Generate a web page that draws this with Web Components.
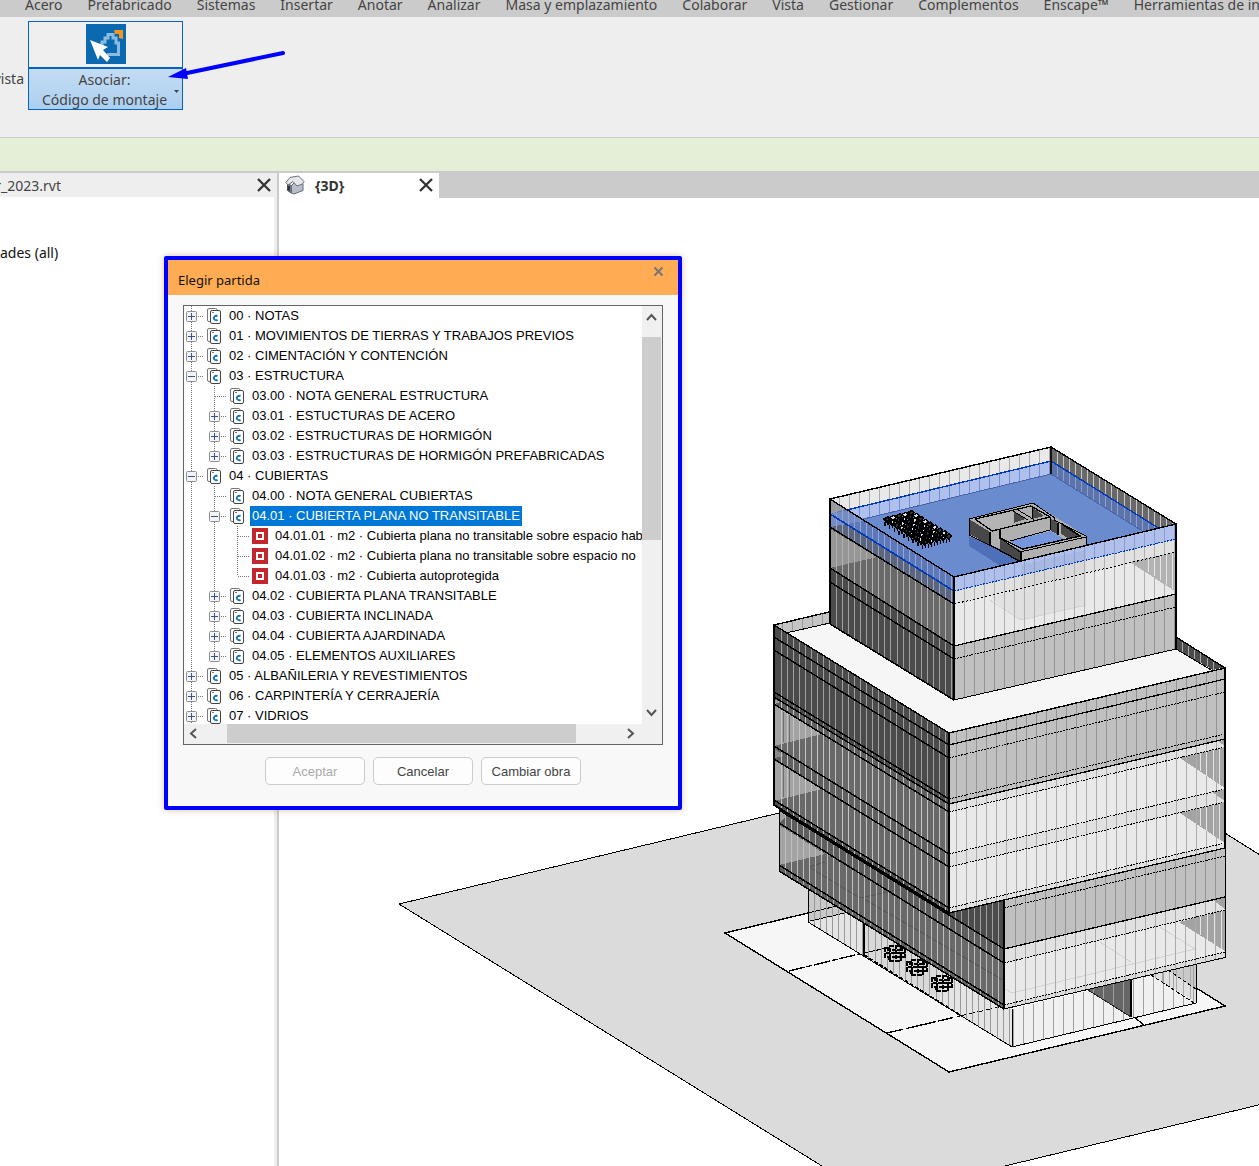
<!DOCTYPE html>
<html lang="es">
<head>
<meta charset="utf-8">
<title>Elegir partida</title>
<style>
html, body { height: 100%; margin: 0; }
body { font-family: "Noto Sans", "Open Sans", sans-serif; font-size: 14px; color: #444; background: #fff; overflow: hidden; }
</style>
</head>
<body>
<app-window>
  <menu-bar slot="menu">
    <a href="#acero">Acero</a><a href="#prefabricado">Prefabricado</a><a href="#sistemas">Sistemas</a><a href="#insertar">Insertar</a><a href="#anotar">Anotar</a><a href="#analizar">Analizar</a><a href="#masa">Masa y emplazamiento</a><a href="#colaborar">Colaborar</a><a href="#vista">Vista</a><a href="#gestionar">Gestionar</a><a href="#complementos">Complementos</a><a href="#enscape">Enscape™</a><a href="#herramientas">Herramientas de int</a>
  </menu-bar>
  <ribbon-panel slot="ribbon"></ribbon-panel>
  <project-browser slot="browser"><span slot="title">r_2023.rvt</span><span>ades (all)</span></project-browser>
  <model-view slot="view"><span slot="title">{3D}</span><model-scene></model-scene></model-view>
  <item-dialog slot="dialog">
    <span slot="title">Elegir partida</span>
    <item-tree></item-tree>
    <push-button slot="actions" disabled>Aceptar</push-button>
    <push-button slot="actions">Cancelar</push-button>
    <push-button slot="actions">Cambiar obra</push-button>
  </item-dialog>
</app-window>

<script>
function define(name, html, setup) {
  customElements.define(name, class extends HTMLElement {
    constructor() {
      super();
      this.attachShadow({ mode: 'open' }).innerHTML = '<style>:host,*{box-sizing:border-box}</style>' + html;
    }
    connectedCallback() { if (setup) setup(this, this.shadowRoot); }
  });
}

define('app-window', `
<style>
:host { display: grid; grid-template-rows: 17px 120px 36px 1fr; height: 100vh; position: relative; overflow: hidden; }
.status { background: #e5efd8; border-top: 1px solid #cbcbcb; border-bottom: 2px solid #cbcbcb; }
.work { display: grid; grid-template-columns: 279px 1fr; min-height: 0; }
</style>
<slot name="menu"></slot>
<slot name="ribbon"></slot>
<div class="status"></div>
<div class="work"><slot name="browser"></slot><slot name="view"></slot></div>
<slot name="dialog"></slot>`);

define('menu-bar', `
<style>
:host { display: flex; align-items: flex-end; gap: 25px; padding: 0 0 2px 25px; background: #cbcbcb; overflow: hidden; height: 17px; white-space: nowrap; }
::slotted(a) { color: #444; text-decoration: none; line-height: 20px; flex: none; }
</style><slot></slot>`);

define('ribbon-panel', `
<style>
:host { display: flex; gap: 4px; background: #eee; padding-top: 4px; position: relative; }
.prev { width: 24px; height: 116px; padding-top: 48px; display: flex; justify-content: flex-end; overflow: hidden; line-height: 20px; }
button { width: 155px; height: 89px; padding: 0; border: 1px solid #0563c1; background: #efefef; display: flex; flex-direction: column; font: inherit; color: #444; }
.top { height: 45px; width: 100%; display: flex; justify-content: center; padding-top: 2px; }
.low { height: 42px; width: 100%; border-top: 2px solid #0563c1; background: linear-gradient(#c4dcf4, #accff0); display: flex; align-items: flex-start; justify-content: space-between; padding: 1px 3px 0 13px; line-height: 20px; }
.low svg { flex: none; margin-top: 20px; }
.arrow { position: absolute; left: 166px; top: 31px; }
</style>
<div class="prev"><span>vista</span></div>
<button type="button">
 <span class="top"><svg width="40" height="40" viewBox="0 0 40 40"><path fill="#0a69b1" d="M0 0h40v40H0z"/><path d="M21 30.500h11.500V19H30v-5h-3v-3.500h-5V14h-3v4h-3v4" fill="none" stroke="#8bbbdf" stroke-width="3"/><path fill="#f7941d" d="M28 6h9v9l-4-1v-4h-4z"/><path fill="#fff" d="m4 16 18 7-5 3 7 8-3 4-7-7-2 5z"/></svg></span>
 <span class="low"><span>Asociar:<br>Código de montaje</span><svg width="5" height="4" viewBox="0 0 5 4"><path fill="#444" d="M0 0h5L2.500 3z"/></svg></span>
</button>
<svg class="arrow" width="120" height="34" viewBox="166 48 120 34"><path d="m283 53-96 20" stroke="#00f" stroke-width="4" stroke-linecap="round"/><path d="m168 77 18-9 2 11z" fill="#00f"/></svg>`);

const cross = '<svg width="14" height="14" viewBox="0 0 14 14"><path d="m1 1 12 12M13 1 1 13" stroke="#333" stroke-width="2.300"/></svg>';

define('project-browser', `
<style>
:host { display: flex; flex-direction: column; border-right: 2px solid #cbcbcb; min-height: 0; min-width: 0; background: #fff; }
header { height: 24px; background: #eee; display: flex; align-items: center; justify-content: space-between; padding-right: 6px; }
.name { width: 61px; display: flex; justify-content: flex-end; white-space: nowrap; overflow: hidden; }
button { border: 0; background: none; padding: 0; width: 14px; height: 14px; display: flex; }
.body { flex: 1; padding-top: 46px; line-height: 20px; color: #111; border-right: 3px solid #eee; }
</style>
<header><span class="name"><slot name="title"></slot></span><button type="button" aria-label="Cerrar">${cross}</button></header>
<div class="body"><slot></slot></div>`);

define('model-view', `
<style>
:host { display: flex; flex-direction: column; min-width: 0; min-height: 0; }
header { background: #cbcbcb; height: 25px; flex: none; display: flex; }
.tab { width: 160px; background: #fff; display: flex; align-items: center; padding: 0 6px 1px; font-weight: 700; font-size: 14px; color: #333; }
.tab svg { flex: none; }
.name { flex: 1; padding-left: 10px; }
button { border: 0; background: none; padding: 0; width: 14px; height: 14px; display: flex; }
.body { flex: 1; min-height: 0; display: flex; }
</style>
<header><div class="tab"><svg width="20" height="20" viewBox="0 0 20 20"><path d="m2.500 9 4 1.500v7.500l-4-2.500z" fill="#777f8c" stroke="#444b55"/><path d="M6.500 10.500 12 5l6 4v6.500L9 19l-2.500-1z" fill="#b7bec9" stroke="#666d78"/><path d="M.8 7.500 5 2.500l8.500-1.500 5.500 5.500-1.500 2.500-5.500 2-4-4.500L3 10z" fill="#e6e8eb" stroke="#6b717b"/><path d="M3 11h2v5l-2-1z" fill="#2f3640"/></svg><span class="name"><slot name="title"></slot></span><button type="button" aria-label="Cerrar vista">${cross}</button></div></header>
<div class="body"><slot></slot></div>`);

/* Axonometric building, drawn from wall bands that share slopes. */
function scene() {
  const out = [];
  const P = (pts, fill, opacity = 1) => out.push(`<polygon points="${pts}" fill="${fill}" fill-opacity="${opacity}"/>`);
  const L = (pts, stroke = '#000', w = 1, dash = '') => out.push(`<polyline points="${pts}" fill="none" stroke="${stroke}" stroke-width="${w}"${dash ? ` stroke-dasharray="${dash}"` : ''}/>`);
  const band = (x0, x1, a, b, fill) => P(`${x0},${a[0]} ${x1},${a[1]} ${x1},${b[1]} ${x0},${b[0]}`, fill);
  const stripes = (x0, x1, a, b, color, start, step) => {
    let d = '';
    for (let x = start; x < x1 - 1; x += step) {
      const t = (x - x0) / (x1 - x0), X = Math.floor(x) + .5;
      d += `M${X} ${(a[0] + (a[1] - a[0]) * t).toFixed(1)}V${(b[0] + (b[1] - b[0]) * t).toFixed(1)}`;
    }
    out.push(`<path d="${d}" stroke="${color}" fill="none"/>`);
  };
  /* terrain and plot */
  P('399,904 780,813 1000,760 1225,833 1300,880 1300,1095 930,1184 851,1184', '#dbdbdb');
  L('851,1184 399,904 800,808'); L('1220,830 1300,880'); L('1300,1095 930,1184');
  P('725,933 949,1072 1225,1006 1001,867', '#f6f6f6');
  L('808,913 725,933 949,1072 1225,1006 1190,984', '#000', 1.4);
  L('789,971 863,953', '#000', 1.4, '16 2 6 2'); L('887,1033 960,1016', '#000', 1.4, '16 4 30 2'); L('1134,1017 1144,1025', '#000', 1.4);

  /* ground floor */
  band(808, 1012, [888, 1010], [922, 1047], '#e4e4e4');
  P('808,888 808,922 865,908', '#c9c9c9');
  P('864,921 864,955 940,1000 940,970', '#d9d9d9');
  L('810,921 862,909'); L('808,913 845,904');
  L('865,953 886,948'); L('960,1016 1008,1005', '#000', 1, '6 3');
  stripes(808, 1012, [888, 1010], [922, 1047], '#999', 814, 6.1);
  L('808,888 808,922 1012,1047'); L('864,920 864,955', '#000', 2); L('864,955 960,1015', '#000', 2, '4 2');
  [[895, 953], [917, 967], [942, 983]].forEach(([x, y]) => {
    out.push(`<path d="M${x - 10} ${y - 5}h5v-2h11v2h4v9h-4v4h-12v-4h-4z" fill="none" stroke="#000" stroke-width="2.600" stroke-dasharray="5 1"/><path d="M${x - 9} ${y}h19M${x - 8} ${y + 4}h16M${x - 8} ${y - 3}h16M${x - 5} ${y - 5}v13M${x + 1} ${y - 8}v16M${x + 6} ${y - 6}v13" stroke="#000" stroke-width="2" stroke-dasharray="4 1"/>`);
  });
  band(1012, 1196, [1009, 964], [1047, 1003], '#f0f0f0');
  P('1168,970 1196,964 1196,1002', '#c9c9c9');
  P('1151,975 1168,970 1196,990 1196,1002', '#e0e0e0');
  P('1088,990 1131,979 1131,1017', '#666');
  stripes(1012, 1196, [1009, 964], [1047, 1003], '#a0a0a0', 1013, 10);
  stripes(1150, 1196, [975, 964], [975, 1003], '#aaa', 1155, 7);
  L('1012,1009 1012,1047 1196,1003 1196,963'); L('1131,979 1131,1017', '#000', 2);
  L('1151,975 1194,1003', '#000', 1, '4 2'); L('1168,970 1196,989', '#000', 1, '4 2'); L('1088,990 1131,1017', '#222');

  /* lower block */
  const lx = 779, fx = 1004, rx = 1225;
  const low = [[[762, 901], [810, 949], '#4b4b4b', '#a0a0a0'], [[810, 949], [823, 963], '#5e5e5e', '#b8b8b8'], [[823, 963], [865, 1005], '#696969', '#c0c0c0'], [[865, 1005], [871, 1009], '#606060', '#b0b0b0']];
  low.forEach(b => band(lx, fx, b[0], b[1], b[2]));
  P('779,810 787,815 779,823', '#a0a0a0'); P('779,825 825,854 779,865', '#a3a3a3');
  L('825,862 809,867 860,898 915,886', '#565656'); L('864,899 1003,980', '#565656');
  low.forEach(b => stripes(lx, fx, b[0], b[1], b[3], 785, 6.1));
  low.forEach(b => L(`${lx},${b[1][0]} ${fx},${b[1][1]}`, '#000', 1.5));
  L('779,805 779,871');
  const lowR = [[[901, 848], [949, 897], '#c0c0c0', '#949494'], [[949, 897], [963, 910], '#e1e1e1', '#aaa'], [[963, 910], [1005, 952], '#e9e9e9', '#aaa'], [[1005, 952], [1009, 957], '#dcdcdc', '#aaa']];
  lowR.forEach(b => band(fx, rx, b[0], b[1], b[2]));
  P('1179,922 1225,910 1225,951', '#a3a3a3'); P('1213,900 1225,897 1225,909', '#a3a3a3');
  L('1005,989 1012,993 1195,949 1160,927', '#d3d3d3'); L('1100,942 1131,962', '#d3d3d3');
  lowR.forEach(b => stripes(fx, rx, b[0], b[1], b[3], 1015, 10));
  stripes(1179, 1225, [922, 910], [922, 951], '#e5e5e5', 1200, 7);
  L('1004,949 1225,897', '#000', 1.3); L('1004,963 1225,910', '#000', 1, '2 1'); L('1004,1005 1225,952', '#000', 1, '2 1'); L('1004,908 1225,856', '#000', 1, '2 1');
  L('1004,1009 1225,957.5 1225,848'); L('1004,901 1004,1009', '#000', 2);

  /* main block */
  const ml = 774, mf = 949, A = [625, 733], H = [[637, 745], [650, 758], [692, 799], [697, 804], [704, 812], [746, 854], [759, 867], [800, 908], [805, 913]];
  const cols = ['#4b4b4b', '#4b4b4b', '#4b4b4b', '#4b4b4b', '#606060', '#696969', '#606060', '#696969', '#505050'];
  let prev = A;
  H.forEach((h, i) => { band(ml, mf, prev, h, cols[i]); prev = h; });
  P('774,705 822,734 774,746', '#a3a3a3'); P('774,760 822,789 774,801', '#a3a3a3'); P('774,699 780,702 774,704', '#a3a3a3'); P('774,748 784,756 774,758', '#8a8a8a');
  stripes(ml, mf, A, H[3], '#a0a0a0', 781, 6.1); stripes(ml, mf, H[3], H[8], '#c4c4c4', 781, 6.1);
  out.push('<path d="M783.500 712v30M789.500 715v27M783.500 766v31M789.500 769v28" stroke="#6e6e6e"/>');
  H.forEach((h, i) => L(`${ml},${h[0]} ${mf},${h[1]}`, '#000', i === 8 ? 2 : 1.5));
  const R = [[733, 668], [745, 679], [758, 692], [799, 734], [804, 739], [812, 747], [854, 789], [867, 802], [908, 843], [913, 848]];
  const rc = ['#c0c0c0', '#c0c0c0', '#c0c0c0', '#c0c0c0', '#e1e1e1', '#e9e9e9', '#e1e1e1', '#e9e9e9', '#e1e1e1'];
  rc.forEach((c, i) => band(mf, rx, R[i], R[i + 1], c));
  P('1180,758 1225,747 1225,788', '#a3a3a3'); P('1180,813 1225,802 1225,843', '#a3a3a3'); P('1212,792 1225,789 1225,801', '#a3a3a3'); P('1218,741 1225,740 1225,746', '#a3a3a3');
  stripes(mf, rx, R[0], R[4], '#949494', 956.7, 10); stripes(mf, rx, R[4], R[9], '#adadad', 956.7, 10);
  stripes(1180, 1225, [758, 747], [758, 788], '#e5e5e5', 1200, 6.5); stripes(1180, 1225, [813, 802], [813, 843], '#e5e5e5', 1200, 6.5);
  [[1, 1], [2, 0], [3, 0], [4, 1], [5, 0], [6, 0], [7, 0], [8, 0], [9, 1]].forEach(([i, solid]) => L(`${mf},${R[i][0]} ${rx},${R[i][1]}`, '#000', solid ? 1.3 : 1, solid ? '' : '2 1'));
  P('774,625 829,612 829,623 786,633', '#c4c4c4'); out.push('<path d="M782.500 624v6M792.500 621v10M802.500 619v10M812.500 617v9M822.500 614v10" stroke="#999"/>');
  P('1176,637 1225,667 1213,670 1176,649', '#4b4b4b'); out.push('<path d="M1182.500 642v10M1188.500 646v10M1194.500 649v10M1200.500 653v10M1207.500 657v9M1213.500 661v9" stroke="#aaa"/>');
  P('786,633 830,623 954,700 1176,649 1213,670 949,733', '#f6f6f6');
  L('786,633 830,623'); L('829,612 774,625 949,733 1225,668 1176,637', '#000', 1.4); L('1176,649 1213,671');
  L('774,625 774,806', '#000', 2); L('949,733 949,913', '#000', 2.5); L('1225,667 1225,849', '#000', 1.5);

  /* roof interior of the top block */
  P('830,499 1051,447 1051,461 830,514', '#e9e9e9');
  P('830,514 1051,461 1051,474 830,527', '#b0c0ec');
  P('1051,447 1176,524 1176,539 1051,461', '#696969');
  P('1051,461 1176,539 1176,552 1051,474', '#5c74aa');
  P('830,527 1051,474 1176,552 954,604', '#6b8bcf');
  stripes(830, 1051, [499, 447], [514, 461], '#aaa', 839.5, 10); stripes(830, 1051, [514, 461], [527, 474], '#6f8fd8', 839.5, 10);
  stripes(1051, 1176, [447, 524], [461, 539], '#c8c8c8', 1057, 6.1); stripes(1051, 1176, [461, 539], [474, 552], '#8a9fd0', 1057, 6.1);
  L('830,527 1051,474 1176,552', '#4863a8'); L('830,514 1051,461 1176,539', '#0039b8', 1.4); L('1051,447 1051,474', '#111', 2);
  /* rooftop equipment */
  for (let r = 0; r < 5; r++) for (let c = 0; c < 9; c++) {
    const x = 884 + r * 6 + c * 4.7, y = 519 - r * 1.6 + c * 2.9;
    out.push(`<path d="M${x} ${y}l4-2 2 2-3 3zM${x + 1} ${y + 3}v4M${x + 4} ${y + 2}v4" fill="${(r + c) % 2 ? '#e4e4e4' : '#333'}" stroke="#000" stroke-width="1.500"/>`);
  }
  /* stair core */
  P('969,535 989,544 1021,562 1021,579 969,546', '#4f6fb9');
  P('969,519 1033,503 1086,536 1086,548 1021,562 1000,549 989,544 969,536', '#b0b0b0');
  P('969,519 990,532 990,545 969,534', '#484848'); P('1000,538 1021,551 1021,562 1000,550', '#484848');
  P('976,519 1013,511 1013,524 992,529', '#b4b4b4'); P('1014,511 1026,519 1014,523', '#484848'); P('1018,510 1031,507 1031,519 1028,520', '#b0b0b0'); P('1032,507 1044,516 1032,519', '#484848');
  P('1010,541 1051,531 1064,539 1023,549', '#7595dc'); P('1050,518 1058,523 1058,535 1050,530', '#4b4b4b'); P('1061,524 1080,536 1070,539 1061,534', '#484848');
  L('969,519 1033,503 1055,518 1054,520 1086,536 1086,548'); L('975,519 1031,506 1050,517 992,531 975,519', '#000', 1.3); L('1013,511 1028,520'); L('1018,510 1033,519 1032,507');
  L('1000,530 1000,538 1023,549 1080,536 1062,524', '#000', 1.4); L('990,532 990,545 1021,562 1021,551', '#000', 1.4); L('969,519 969,535 989,545'); L('1000,538 1020,552 1086,537'); L('1050,518 1050,530 1010,541'); L('1058,523 1058,535', '#000', 2);

  /* top block walls */
  band(830, 954, [499, 577], [514, 591], '#5d78b8'); band(830, 954, [514, 591], [527, 604], '#5d6678'); band(830, 954, [527, 604], [568, 646], '#696969'); band(830, 954, [568, 646], [624, 700], '#4b4b4b');
  P('830,499 846,509 830,514', '#9b9b9b'); P('830,514 846,511 864,521 830,527', '#748bc4'); P('830,529 877,557 830,568', '#969696');
  stripes(830, 954, [499, 577], [527, 604], '#91a5d6', 836, 6.1); stripes(830, 954, [527, 604], [568, 646], '#b0b0b0', 836, 6.1); stripes(830, 954, [568, 646], [624, 700], '#a0a0a0', 836, 6.1);
  L('830,514 954,591', '#0039b8', 1.6); [[527, 604], [568, 646], [582, 659], [624, 700]].forEach(a => L(`830,${a[0]} 954,${a[1]}`, '#000', 1.5));
  band(954, 1176, [577, 524], [591, 539], '#b0c0ea'); band(954, 1176, [591, 539], [604, 552], '#e1e1e1'); band(954, 1176, [604, 552], [646, 594], '#e9e9e9'); band(954, 1176, [646, 594], [700, 649], '#c0c0c0');
  P('1130,562 1176,552 1176,592', '#b3b3b3'); P('990,597 1021,589 1021,620', '#e1e1e1'); P('1021,565 1086,550 1086,606 1021,620', '#000', .04);
  L('990,600 1021,620 1086,605', '#d3d3d3');
  stripes(954, 1176, [577, 524], [591, 539], '#879fd6', 964.5, 10); stripes(954, 1176, [591, 539], [646, 594], '#b0b0b0', 964.5, 10); stripes(954, 1176, [646, 594], [700, 649], '#949494', 964.5, 10);
  stripes(1135, 1176, [562, 552], [562, 592], '#e5e5e5', 1148, 6.1);
  L('954,591 1176,539', '#0039b8', 1.2, '2 1'); L('954,604 1176,552', '#000', 1, '2 2'); L('954,646 1176,594', '#000', 1.3); L('954,659 1176,607', '#000', 1, '2 1');
  L('1051,447 830,499 954,577 1176,524 1051,447', '#000', 1.4); L('830,624 954,700 1176,649'); L('830,499 830,624', '#000', 1.5); L('954,577 954,700', '#000', 2); L('1176,524 1176,649', '#000', 2);
  return out.join('');
}
define('model-scene', `
<style>:host { display: block; flex: 1; min-width: 0; } svg { display: block; width: 100%; height: 100%; }</style>
<svg viewBox="279 198 980 968" preserveAspectRatio="xMinYMin slice" shape-rendering="crispEdges" role="img" aria-label="Edificio en 3D">${scene()}</svg>`);

define('item-dialog', `
<style>
:host { display: flex; flex-direction: column; position: absolute; left: 164px; top: 256px; width: 518px; border: 4px solid #00f; border-radius: 2px; background: #f8f8f8; box-shadow: 0 0 7px rgba(150,90,40,.35); color: #111; }
header { height: 35px; background: #ffac54; display: flex; justify-content: space-between; padding: 0 14px 0 10px; }
.title { font-size: 13px; line-height: 20px; padding-top: 10px; }
.close { border: 0; background: none; padding: 0; width: 11px; height: 11px; margin-top: 6px; }
.close svg { display: block; }
.body { padding: 10px 15px 0; }
footer { display: flex; justify-content: center; gap: 8px; padding: 12px 0 21px; }
</style>
<header><span class="title"><slot name="title"></slot></span><button class="close" type="button" aria-label="Cerrar"><svg width="11" height="11" viewBox="0 0 11 11"><path d="m1.500 1.500 8 8m0-8-8 8" stroke="#777" stroke-width="2"/></svg></button></header>
<div class="body"><slot></slot></div>
<footer><slot name="actions"></slot></footer>`);

define('push-button', `
<style>
button { display: block; width: 100px; height: 28px; padding: 0; border: 1px solid #ccc; border-radius: 5px; background: #fdfdfd; font: 13px "Liberation Sans", Arial, sans-serif; color: #444; white-space: nowrap; }
button:disabled { color: #aaa; }
:host { display: block; }
</style><button type="button"><slot></slot></button>`, (el, root) => { root.querySelector('button').disabled = el.hasAttribute('disabled'); });

/* Guides, one character a column: | through, t tee, l last, + closed, - open, p closed and last */
const rows = [
  ['+', '00 · NOTAS'], ['+', '01 · MOVIMIENTOS DE TIERRAS Y TRABAJOS PREVIOS'], ['+', '02 · CIMENTACIÓN Y CONTENCIÓN'], ['-', '03 · ESTRUCTURA'],
  ['|t', '03.00 · NOTA GENERAL ESTRUCTURA'], ['|+', '03.01 · ESTUCTURAS DE ACERO'], ['|+', '03.02 · ESTRUCTURAS DE HORMIGÓN'], ['|p', '03.03 · ESTRUCTURAS DE HORMIGÓN PREFABRICADAS'],
  ['-', '04 · CUBIERTAS'], ['|t', '04.00 · NOTA GENERAL CUBIERTAS'], ['|-', '04.01 · CUBIERTA PLANA NO TRANSITABLE', 'sel'],
  ['||t', '04.01.01 · m2 · Cubierta plana no transitable sobre espacio hab', 'item'], ['||t', '04.01.02 · m2 · Cubierta plana no transitable sobre espacio no', 'item'], ['||l', '04.01.03 · m2 · Cubierta autoprotegida', 'item'],
  ['|+', '04.02 · CUBIERTA PLANA TRANSITABLE'], ['|+', '04.03 · CUBIERTA INCLINADA'], ['|+', '04.04 · CUBIERTA AJARDINADA'], ['|p', '04.05 · ELEMENTOS AUXILIARES'],
  ['+', '05 · ALBAÑILERIA Y REVESTIMIENTOS'], ['+', '06 · CARPINTERÍA Y CERRAJERÍA'], ['+', '07 · VIDRIOS']
];
function guide(g) {
  const half = g === 'l' || g === 'p';
  let s = `<path d="M7.500 0V${half ? 10 : 20}" stroke="#777" stroke-dasharray="1 1"/>`;
  if (g !== '|') s += '<path d="M8 10.500h12" stroke="#777" stroke-dasharray="1 1"/>';
  if ('+-p'.includes(g)) s += `<rect x="2.500" y="5.500" width="10" height="10" rx="1" fill="#f4f4f4" stroke="#8f8f8f"/><path d="M4 10.500h7${g === '-' ? '' : 'M7.500 7v7'}" stroke="#34519c"/>`;
  return `<svg width="23" height="20" viewBox="0 0 23 20">${s}</svg>`;
}
const folder = '<svg width="20" height="20" viewBox="0 0 20 20"><path d="M3 15.500H2q-1.500 0-1.500-1.500V4q0-1.500 1.500-1.500h6.500q1.500 0 1.500 1.500" fill="#fff" stroke="#777"/><rect x="3.500" y="4.500" width="10" height="13" rx="1.500" fill="#fff" stroke="#444"/><path d="M5 6.500h2" stroke="#777"/><path d="M10.500 10.300a2.200 2.200 0 1 0 0 3.400" fill="none" stroke="#1674bd" stroke-width="1.800"/></svg>';
const item = '<svg width="20" height="20" viewBox="0 0 20 20"><path d="M-1 2h16v16H-1z" fill="#c1272d"/><path d="M4 7h6v6H4z" fill="none" stroke="#fff" stroke-width="2"/></svg>';
define('tree-row', `
<style>
:host { display: flex; height: 20px; white-space: pre; flex: none; }
svg { display: block; flex: none; overflow: visible; }
button { border: 0; padding: 0; background: none; height: 20px; }
.guides { display: flex; }
.text { height: 20px; line-height: 20px; padding: 0 2px; }
:host([aria-selected=true]) .text { background: #0078d7; color: #fff; }
</style><span class="guides"></span><span class="text"><slot></slot></span>`, (el, root) => {
  const g = el.getAttribute('guides');
  root.querySelector('.guides').innerHTML = [...g].map(c => '+-p'.includes(c) ? `<button type="button" tabindex="-1" aria-label="${c === '-' ? 'Contraer' : 'Expandir'}">${guide(c)}</button>` : guide(c)).join('') + (el.hasAttribute('item') ? item : folder);
});

const chev = d => `<svg width="11" height="11" viewBox="0 0 11 11"><path d="${d}" fill="none" stroke="#555" stroke-width="2"/></svg>`;
define('item-tree', `
<style>
:host { display: grid; grid-template-columns: minmax(0, 1fr) 20px; grid-template-rows: 418px 20px; border: 1px solid #646464; background: #f0f0f0; font: 13px "Liberation Sans", Arial, sans-serif; color: #000; }
.rows { background: #fff; overflow: hidden; display: flex; flex-direction: column; min-width: 0; }
.v, .h { display: flex; align-items: center; justify-content: space-between; }
.v { flex-direction: column; padding: 6px 1px 6px 0; }
.h { padding: 0 6px 1px 4px; }
button { border: 0; background: none; padding: 0; width: 11px; height: 11px; flex: none; }
button svg { display: block; }
.v .track { flex: 1; width: 100%; padding-top: 14px; } .v .thumb { height: 203px; background: #cdcdcd; }
.h .track { flex: 1; height: 100%; padding-left: 28px; } .h .thumb { width: 349px; height: 100%; background: #cdcdcd; }
</style>
<div class="rows" role="tree">${rows.map(r => `<tree-row role="treeitem" guides="${r[0]}"${r[2] === 'sel' ? ' aria-selected="true"' : ''}${r[2] === 'item' ? ' item' : ''}>${r[1]}</tree-row>`).join('')}</div>
<div class="v"><button type="button" aria-label="Arriba">${chev('M1 8l4.500-5L10 8')}</button><div class="track"><div class="thumb"></div></div><button type="button" aria-label="Abajo">${chev('M1 3l4.500 5L10 3')}</button></div>
<div class="h"><button type="button" aria-label="Izquierda">${chev('M8 1L3 5.500 8 10')}</button><div class="track"><div class="thumb"></div></div><button type="button" aria-label="Derecha">${chev('M3 1l5 4.500L3 10')}</button></div>`);
</script>
</body>
</html>
